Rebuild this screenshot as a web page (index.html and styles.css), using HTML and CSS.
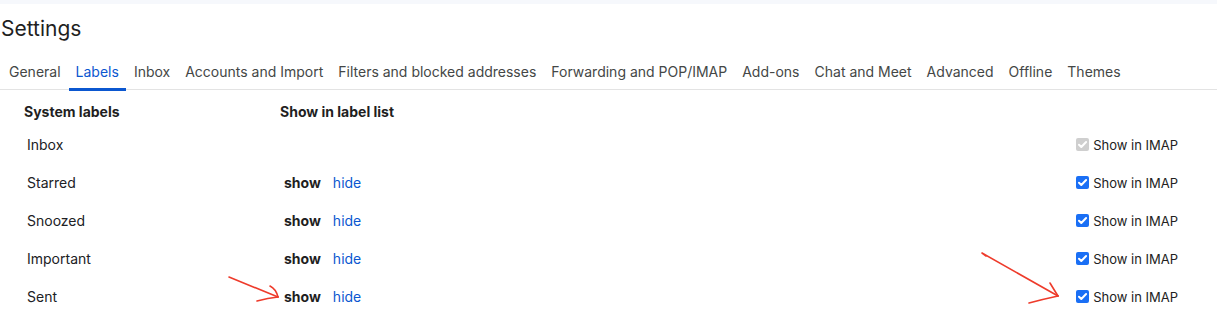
FILE: index.html
```html
<!DOCTYPE html>
<html lang="en">
<head>
<meta charset="utf-8">
<title>Settings</title>
<link rel="stylesheet" href="styles.css">
</head>
<body>
<div class="page">
  <div class="topband"></div>
  <h1 class="title">Settings</h1>
  <nav class="tabs">
    <a class="tab">General</a>
    <a class="tab active">Labels</a>
    <a class="tab">Inbox</a>
    <a class="tab">Accounts and Import</a>
    <a class="tab">Filters and blocked addresses</a>
    <a class="tab">Forwarding and POP/IMAP</a>
    <a class="tab">Add-ons</a>
    <a class="tab">Chat and Meet</a>
    <a class="tab">Advanced</a>
    <a class="tab">Offline</a>
    <a class="tab">Themes</a>
  </nav>
  <div class="labels">
    <div class="row head">
      <div class="c-name">System labels</div>
      <div class="c-show">Show in label list</div>
      <div class="c-imap"></div>
    </div>
    <div class="row">
      <div class="c-name pad">Inbox</div>
      <div class="c-show"></div>
      <div class="c-imap"><span class="cb disabled"><svg viewBox="0 0 13 13"><path d="M3 6.7l2.3 2.3 4.8-5" /></svg></span>Show in IMAP</div>
    </div>
    <div class="row">
      <div class="c-name pad">Starred</div>
      <div class="c-show pad2"><b class="sel">show</b><a class="lnk">hide</a></div>
      <div class="c-imap"><span class="cb"><svg viewBox="0 0 13 13"><path d="M3 6.7l2.3 2.3 4.8-5" /></svg></span>Show in IMAP</div>
    </div>
    <div class="row">
      <div class="c-name pad">Snoozed</div>
      <div class="c-show pad2"><b class="sel">show</b><a class="lnk">hide</a></div>
      <div class="c-imap"><span class="cb"><svg viewBox="0 0 13 13"><path d="M3 6.7l2.3 2.3 4.8-5" /></svg></span>Show in IMAP</div>
    </div>
    <div class="row">
      <div class="c-name pad">Important</div>
      <div class="c-show pad2"><b class="sel">show</b><a class="lnk">hide</a></div>
      <div class="c-imap"><span class="cb"><svg viewBox="0 0 13 13"><path d="M3 6.7l2.3 2.3 4.8-5" /></svg></span>Show in IMAP</div>
    </div>
    <div class="row">
      <div class="c-name pad">Sent</div>
      <div class="c-show pad2"><b class="sel">show</b><a class="lnk">hide</a></div>
      <div class="c-imap"><span class="cb"><svg viewBox="0 0 13 13"><path d="M3 6.7l2.3 2.3 4.8-5" /></svg></span>Show in IMAP</div>
    </div>
  </div>
  <svg class="annot" width="1217" height="311" viewBox="0 0 1217 311">
    <path d="M229 277 L278 297" />
    <path d="M270 286 Q276 289 278 297" />
    <path d="M257 301 Q268 298 278 297" />
    <path d="M986 256 L982 253 L1058 296" />
    <path d="M1050 283 Q1053 288 1058 296" />
    <path d="M1029 303 Q1044 299 1058 296" />
  </svg>
</div>
</body>
</html>
```
FILE: styles.css
```css
html, body {
  margin: 0;
  padding: 0;
  background: #ffffff;
}
body {
  font-family: Inter, Roboto, "Liberation Sans", sans-serif;
  color: #202124;
  font-size: 14px;
}
.page {
  position: relative;
  width: 1217px;
  height: 311px;
  overflow: hidden;
}
.topband {
  height: 4px;
  background: #f6f8fc;
}
.title {
  margin: 0;
  padding: 11px 0 0 1px;
  height: 31px;
  line-height: 28px;
  font-size: 21px;
  font-weight: 400;
  color: #1f1f1f;
}
.tabs {
  display: flex;
  gap: 1px;
  padding-left: 2px;
  margin-top: 10px;
  height: 33px;
  border-bottom: 1px solid #e3e3e3;
}
.tab {
  display: block;
  padding: 0 7px;
  height: 35px;
  line-height: 32px;
  color: #444746;
  font-size: 14px;
  white-space: nowrap;
  box-sizing: border-box;
  border-bottom: 3px solid transparent;
}
.tab.active {
  color: #0b57d0;
  border-bottom-color: #0b57d0;
}
.labels {
  padding: 9px 39px 0 24px;
}
.row {
  display: flex;
  align-items: center;
  height: 38px;
}
.row.head {
  height: 24px;
  margin-bottom: 2px;
  font-weight: 700;
  color: #1f1f1f;
}
.c-name {
  width: 256px;
  flex: none;
}
.c-name.pad {
  padding-left: 3px;
  box-sizing: border-box;
}
.c-show {
  flex: 1;
  display: flex;
  align-items: center;
}
.c-show.pad2 {
  padding-left: 4px;
}
.sel {
  font-weight: 700;
  color: #1f1f1f;
  margin-right: 12px;
}
.lnk {
  color: #0b57d0;
}
.c-imap {
  display: flex;
  align-items: center;
  color: #222222;
  font-size: 13px;
  padding-top: 2px;
}
.cb {
  width: 13px;
  height: 13px;
  border-radius: 2px;
  background: #1a6ff5;
  margin-right: 4px;
  display: inline-block;
  flex: none;
  margin-top: -2px;
}
.cb.disabled {
  background: #cfcfcf;
}
.cb svg {
  display: block;
  width: 13px;
  height: 13px;
}
.cb svg path {
  fill: none;
  stroke: #ffffff;
  stroke-width: 2;
  stroke-linecap: round;
  stroke-linejoin: round;
}
.annot {
  position: absolute;
  left: 0;
  top: 0;
  pointer-events: none;
}
.annot path {
  fill: none;
  stroke: #ee3b2b;
  stroke-width: 1.6;
  stroke-linecap: round;
  stroke-linejoin: round;
}
```
